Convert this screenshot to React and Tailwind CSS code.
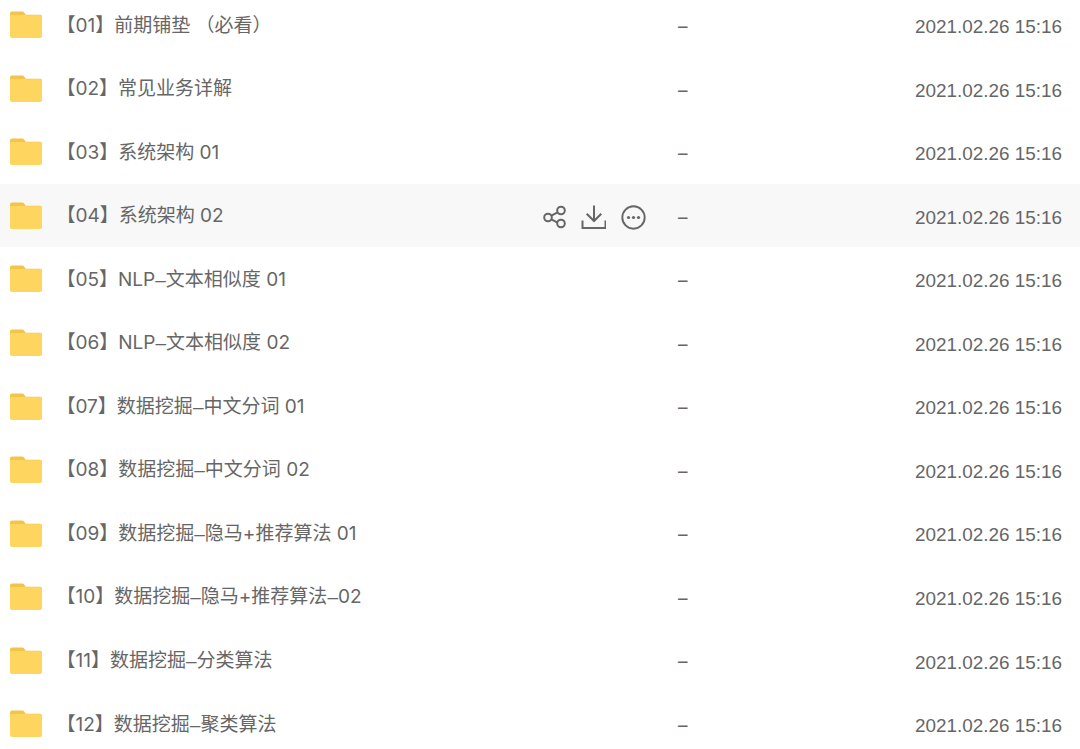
const rows = [
  ["【01】前期铺垫 （必看）"],
  ["【02】常见业务详解"],
  ["【03】系统架构 01"],
  ["【04】系统架构 02", true],
  ["【05】NLP–文本相似度 01"],
  ["【06】NLP–文本相似度 02"],
  ["【07】数据挖掘–中文分词 01"],
  ["【08】数据挖掘–中文分词 02"],
  ["【09】数据挖掘–隐马+推荐算法 01"],
  ["【10】数据挖掘–隐马+推荐算法–02"],
  ["【11】数据挖掘–分类算法"],
  ["【12】数据挖掘–聚类算法"],
];

function Folder() {
  return (
    <svg width="32" height="27" viewBox="0 0 32 27" className="shrink-0">
      <path d="M0 2.5A2 2 0 0 1 2 .5h10a3 3 0 0 1 2.5 1.4l1.2 1.8H30a2 2 0 0 1 2 2V10H0z" fill="#F3C449" />
      <path d="M0 5a1 1 0 0 1 1-1h15l1 0.2h13a2 2 0 0 1 2 2V25a2 2 0 0 1-2 2H2a2 2 0 0 1-2-2z" fill="#FDD55F" />
    </svg>
  );
}

function Actions() {
  return (
    <div className="flex items-center gap-[15px] mt-[4px]">
      <svg width="25" height="25" viewBox="0 0 25 25" fill="none" stroke="#666" strokeWidth="2">
        <circle cx="7" cy="12.5" r="3.8" />
        <circle cx="20" cy="5.5" r="3.8" />
        <circle cx="20" cy="18.5" r="3.8" />
        <path d="M10.4 10.7l6.2-3.4M10.4 14.3l6.2 3.4" />
      </svg>
      <svg width="25" height="25" viewBox="0 0 25 25" fill="none" stroke="#666" strokeWidth="2">
        <path d="M13 .5V16M5.7 8.7l7.3 7.3 7.3-7.3M1.5 15.5V23h23v-7.5" />
      </svg>
      <svg width="25" height="25" viewBox="0 0 25 25" fill="none" stroke="#666" strokeWidth="1.9">
        <circle cx="12.5" cy="12.5" r="11.2" />
        <circle cx="7.5" cy="12.5" r="1.6" fill="#666" stroke="none" />
        <circle cx="12.5" cy="12.5" r="1.6" fill="#666" stroke="none" />
        <circle cx="17.5" cy="12.5" r="1.6" fill="#666" stroke="none" />
      </svg>
    </div>
  );
}

function Name({ text }) {
  const parts = text.split("–");
  return parts.map((p, i) => (
    <span key={i}>
      {i > 0 && <span className="font-['Liberation_Sans',sans-serif]">–</span>}
      {p}
    </span>
  ));
}

export default function App() {
  return (
    <div className="w-[1080px] h-[749px] overflow-hidden bg-white text-[#666] text-[19px] font-['Inter','Noto_Sans_CJK_SC',sans-serif]">
      <div className="flex flex-col -mt-[7px]">
        {rows.map(([name, hover]) => (
          <div key={name} className={`flex items-center h-[63.55px] shrink-0 pl-[10px] pr-[18px] ${hover ? "bg-[#f8f8f8]" : ""}`}>
            <Folder />
            <div className="ml-[14.5px] flex-1 min-w-0 whitespace-pre mt-[2px]"><Name text={name} /></div>
            {hover && <Actions />}
            <div className="w-[168px] ml-[32px] mt-[5px] shrink-0 text-left">–</div>
            <div className="w-[216px] text-right mt-[5px] shrink-0 text-[18.9px] font-['Liberation_Sans',sans-serif]">2021.02.26 15:16</div>
          </div>
        ))}
      </div>
    </div>
  );
}
